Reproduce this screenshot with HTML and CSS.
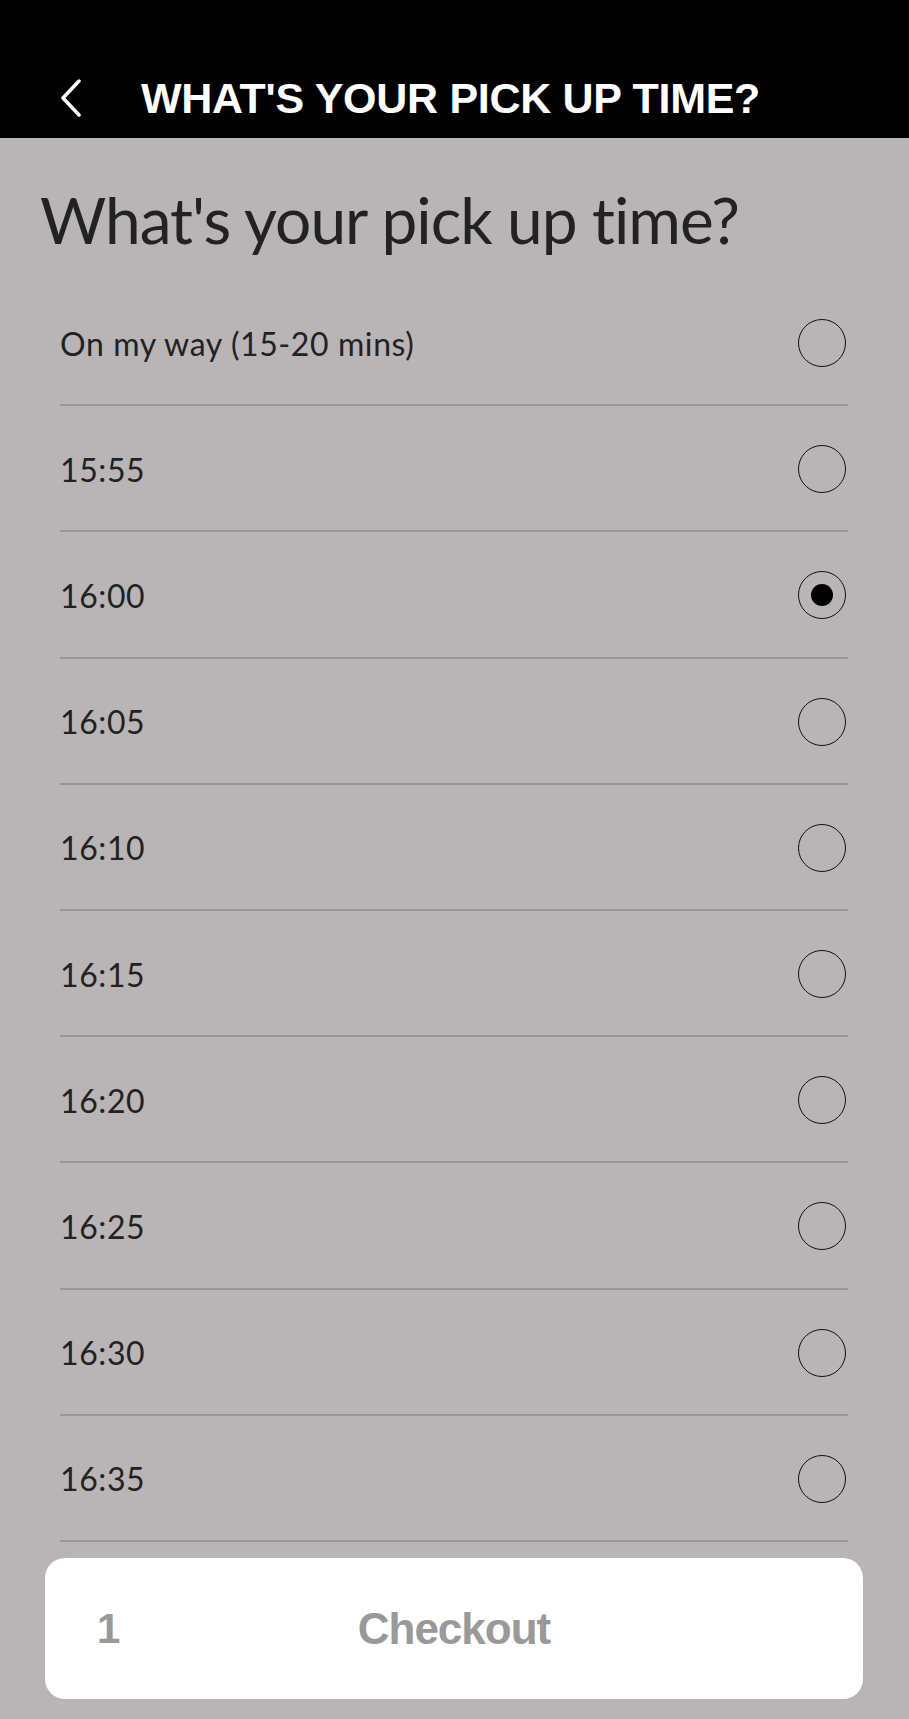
FILE: index.html
```html
<!DOCTYPE html>
<html>
<head>
<meta charset="utf-8">
<link rel="stylesheet" href="styles.css">
</head>
<body>
<div class="app">
  <header class="topbar">
    <span class="back">
      <svg width="22" height="38" viewBox="0 0 22 38"><path d="M19 2 L3 19 L19 36" fill="none" stroke="#fff" stroke-width="3.5" stroke-linecap="round" stroke-linejoin="round"/></svg>
    </span>
    <h1 class="topbar-title">WHAT'S YOUR PICK UP TIME?</h1>
  </header>
  <main class="content">
    <h2 class="heading">What's your pick up time?</h2>
    <ul class="options">
      <li class="option"><span class="label">On my way (15-20 mins)</span><span class="radio"></span></li>
      <li class="option"><span class="label">15:55</span><span class="radio"></span></li>
      <li class="option"><span class="label">16:00</span><span class="radio checked"></span></li>
      <li class="option"><span class="label">16:05</span><span class="radio"></span></li>
      <li class="option"><span class="label">16:10</span><span class="radio"></span></li>
      <li class="option"><span class="label">16:15</span><span class="radio"></span></li>
      <li class="option"><span class="label">16:20</span><span class="radio"></span></li>
      <li class="option"><span class="label">16:25</span><span class="radio"></span></li>
      <li class="option"><span class="label">16:30</span><span class="radio"></span></li>
      <li class="option"><span class="label">16:35</span><span class="radio"></span></li>
    </ul>
  </main>
  <div class="footer">
    <button class="checkout"><span class="count">1</span><span class="checkout-label">Checkout</span><span class="spacer"></span></button>
  </div>
</div>
</body>
</html>
```
FILE: styles.css
```css
html, body {
  margin: 0;
  padding: 0;
}
body {
  background: #b9b5b6;
  font-family: "Lato", "Liberation Sans", sans-serif;
  width: 909px;
  height: 1719px;
  overflow: hidden;
}
.app {
  position: relative;
  height: 1719px;
  overflow: hidden;
}
.topbar {
  background: #000;
  height: 138px;
  box-sizing: border-box;
  padding: 77px 0 0 60px;
  display: flex;
  align-items: flex-start;
}
.back {
  display: flex;
  width: 22px;
  height: 38px;
  margin-top: 2px;
}
.topbar-title {
  margin: 0 0 0 59px;
  color: #fff;
  font-family: "Liberation Sans", sans-serif;
  font-weight: 700;
  font-size: 43px;
  line-height: 42px;
  letter-spacing: -0.3px;
  white-space: nowrap;
}
.heading {
  margin: 0;
  padding: 42px 0 0 40px;
  height: 100px;
  color: #222;
  font-weight: 400;
  font-size: 64px;
  line-height: 80px;
  letter-spacing: -1px;
  white-space: nowrap;
}
.options {
  list-style: none;
  margin: 0 0 0 60px;
  padding: 0;
  width: 788px;
}
.option {
  height: 126.2px;
  box-sizing: border-box;
  border-bottom: 2px solid #9a9697;
  display: flex;
  align-items: center;
  justify-content: space-between;
  padding-top: 2px;
}
.label {
  color: #222;
  font-size: 32px;
  letter-spacing: 0.6px;
}
.radio {
  width: 46px;
  height: 46px;
  border: 1.5px solid #111;
  border-radius: 50%;
  margin-right: 2px;
  display: flex;
  align-items: center;
  justify-content: center;
}
.radio.checked::after {
  content: "";
  width: 22px;
  height: 22px;
  border-radius: 50%;
  background: #000;
}
.footer {
  position: absolute;
  left: 45px;
  right: 46px;
  top: 1558px;
}
.checkout {
  width: 100%;
  height: 141px;
  border: none;
  border-radius: 20px;
  background: #fff;
  display: grid;
  grid-template-columns: 1fr auto 1fr;
  align-items: center;
  padding: 0 52px;
  box-sizing: border-box;
  font-family: "Liberation Sans", sans-serif;
  font-weight: 700;
  color: #999;
}
.count {
  justify-self: start;
  font-size: 42px;
  line-height: 48px;
}
.checkout-label {
  font-size: 44px;
  letter-spacing: -1px;
  line-height: 48px;
}
.spacer {
  display: block;
}
```
